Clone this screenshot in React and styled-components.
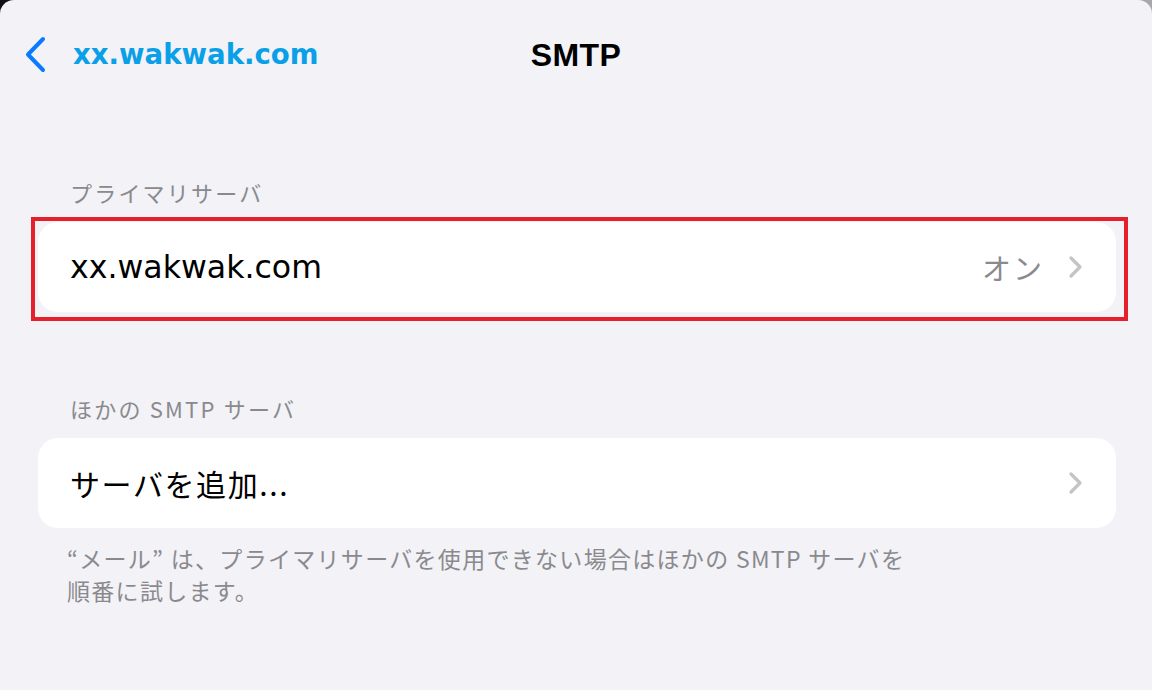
import React from 'react'
import styled, { createGlobalStyle } from 'styled-components'

const GlobalStyle = createGlobalStyle`
  html, body {
    margin: 0;
    padding: 0;
    background: linear-gradient(to right, #111 0%, #555 50%, #a8a8a8 100%);
  }
  body {
    font-family: "Noto Sans CJK JP", "Noto Sans", sans-serif;
  }
`

const Screen = styled.div`
  width: 1152px;
  height: 690px;
  background: #f2f2f7;
  border-radius: 14px 14px 0 0;
  overflow: hidden;
`

const NavBar = styled.div`
  height: 108px;
  display: grid;
  grid-template-columns: 1fr auto 1fr;
  align-items: center;
  padding: 0 24px;
`

const BackButton = styled.div`
  display: flex;
  align-items: center;
  gap: 27px;
  color: #0aa0e8;
  font-family: "DejaVu Sans", "Noto Sans CJK JP", sans-serif;
  font-weight: bold;
  font-size: 27.6px;
`

const Title = styled.div`
  font-family: "Liberation Sans", Arial, sans-serif;
  font-weight: bold;
  font-size: 32px;
  color: #000;
  letter-spacing: 0.4px;
  padding-top: 2px;
`

const Content = styled.div`
  padding: 0 36px 0 38px;
`

const SectionLabel = styled.div`
  margin: ${p => p.$top}px 0 14px;
  padding-left: 32px;
  height: 30px;
  line-height: 28px;
  font-size: 22px;
  letter-spacing: 2.2px;
  color: #8a8a8e;
`

const Card = styled.div`
  position: relative;
  height: 90px;
  background: #fff;
  border-radius: 20px;
  display: flex;
  align-items: center;
  padding: 0 33px 0 32px;

  ${p => p.$highlight && `
    &::after {
      content: "";
      position: absolute;
      top: -5px;
      left: -7px;
      right: -12px;
      bottom: -9px;
      border: 4px solid #e6202b;
      pointer-events: none;
    }
  `}
`

const RowLabel = styled.div`
  flex: 1;
  font-size: ${p => p.$latin ? 31.6 : 30}px;
  letter-spacing: ${p => p.$latin ? 0 : 1.6}px;
  color: #000;
  font-family: ${p => p.$latin ? '"DejaVu Sans", ' : ''}"Noto Sans CJK JP", sans-serif;
`

const RowValue = styled.div`
  font-size: 29px;
  color: #8a8a8e;
  margin-right: 24px;
  letter-spacing: 2px;
`

const Footer = styled.div`
  margin-top: 14px;
  padding-left: 29px;
  font-size: 23px;
  line-height: 32px;
  letter-spacing: 1.3px;
  color: #8a8a8e;
`

const Chevron = () => (
  <svg width="15" height="24" viewBox="0 0 15 24">
    <path d="M3 3 L12 12 L3 21" fill="none" stroke="#c4c4c7" strokeWidth="3.2" strokeLinecap="round" strokeLinejoin="round" />
  </svg>
)

const BackChevron = () => (
  <svg width="22" height="37" viewBox="0 0 22 37">
    <path d="M19 3 L4 18.5 L19 34" fill="none" stroke="#0a7aff" strokeWidth="4" strokeLinecap="round" strokeLinejoin="round" />
  </svg>
)

export default function App() {
  return (
    <>
      <GlobalStyle />
      <Screen>
        <NavBar>
          <BackButton>
            <BackChevron />
            <span>xx.wakwak.com</span>
          </BackButton>
          <Title>SMTP</Title>
          <div />
        </NavBar>
        <Content>
          <SectionLabel $top={70}>プライマリサーバ</SectionLabel>
          <Card $highlight>
            <RowLabel $latin>xx.wakwak.com</RowLabel>
            <RowValue>オン</RowValue>
            <Chevron />
          </Card>
          <SectionLabel $top={82}>ほかの SMTP サーバ</SectionLabel>
          <Card>
            <RowLabel>サーバを追加...</RowLabel>
            <Chevron />
          </Card>
          <Footer>
            “メール” は、プライマリサーバを使用できない場合はほかの SMTP サーバを<br />
            順番に試します。
          </Footer>
        </Content>
      </Screen>
    </>
  )
}
